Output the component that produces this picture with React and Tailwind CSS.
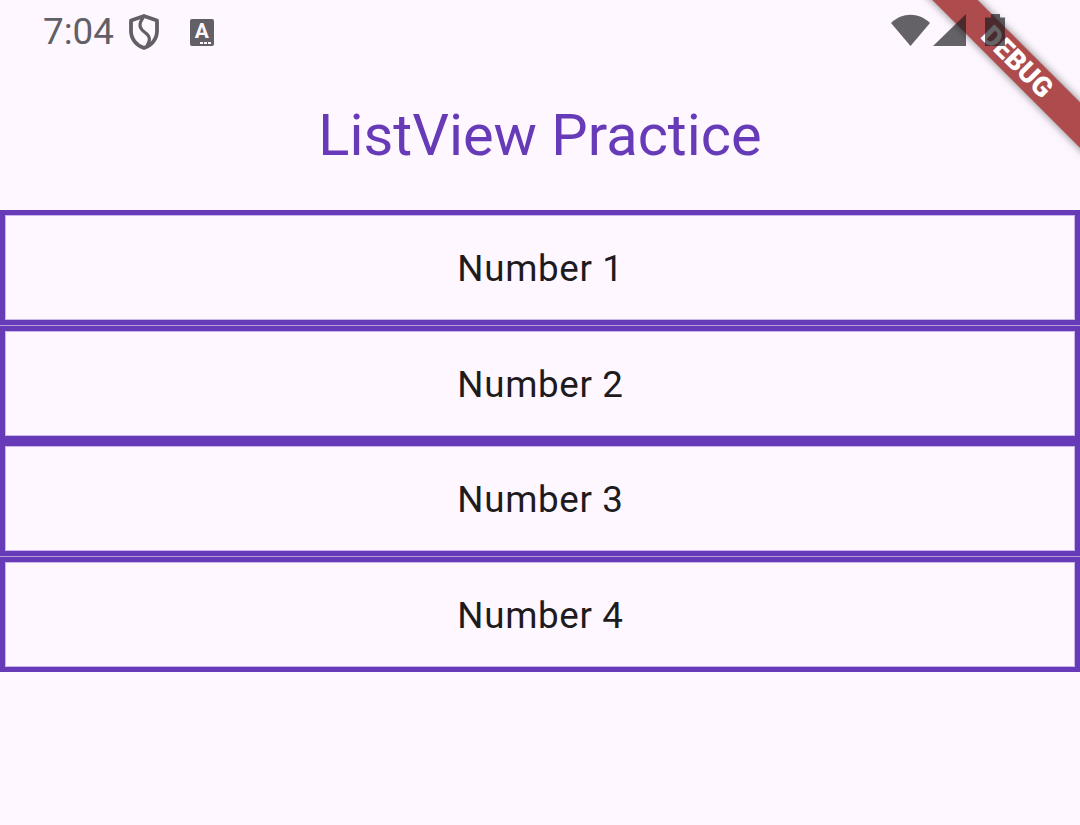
const font = { fontFamily: 'Roboto, sans-serif' };
const ink = 'rgba(28,27,31,0.68)';

function Shield() {
  return (
    <svg width="32" height="38" viewBox="0 0 32 38" className="ml-[13px] mt-[1px]">
      <path d="M16 3 L29 7.5 V18 C29 26 23.5 32.5 16 35 C8.500 32.5 3 26 3 18 V7.500 Z" fill="none" stroke="#625f66" strokeWidth="3.8" strokeLinejoin="round" />
      <path d="M15.500 4 C9.500 12 12 16 17 19.500 C22 23 23 27 19 33" fill="none" stroke="#625f66" strokeWidth="3.2" />
    </svg>
  );
}

function KeyboardBadge() {
  return (
    <div className="relative ml-[30px] mt-[1px] flex h-[27px] w-[24px] justify-center rounded-[2px] bg-[#625f66]">
      <span className="text-[21px] font-bold leading-[24px] text-[#fef7ff]">A</span>
      <div className="absolute bottom-[2px] right-[3px] flex gap-[1px]">
        <span className="h-[2px] w-[3px] bg-[#fef7ff]" />
        <span className="h-[2px] w-[3px] bg-[#fef7ff]" />
        <span className="h-[2px] w-[3px] bg-[#fef7ff]" />
      </div>
    </div>
  );
}

function StatusRight() {
  return (
    <svg width="115" height="36" viewBox="0 0 115 36">
      <path d="M0 10 C11 -1 28 -1 39 10 L19.500 33 Z" fill={ink} />
      <path d="M42 33 L75 1 V33 Z" fill={ink} />
      <path d="M100 1 H109 V4.500 H114 V33 H94 V4.500 H100 Z" fill={ink} />
    </svg>
  );
}

function Row({ label, className }) {
  return (
    <div className={`flex h-[115px] items-center justify-center border-[5px] border-[#673ab7] shadow-[inset_0_0_0_1px_#c9b6ea] ${className}`}>
      <span className="relative left-[0.5px] top-[2px] text-[36.75px] leading-none tracking-[0.656px] text-[#1d1b20]">{label}</span>
    </div>
  );
}

export default function App() {
  return (
    <div className="relative h-[825px] w-[1080px] overflow-hidden bg-[#fef7ff]" style={font}>
      <div className="relative z-10 flex h-[63px] items-center pl-[43px] pr-[74px]">
        <span className="relative top-[1px] text-[36.75px] leading-none text-[#625f66]">7:04</span>
        <div className="ml-[1px]"><Shield /></div>
        <KeyboardBadge />
        <div className="ml-auto mt-[-1px]"><StatusRight /></div>
      </div>
      <div className="flex h-[147px] items-center justify-center">
        <span className="relative top-[-1px] text-[57.75px] leading-none text-[#673ab7]">ListView Practice</span>
      </div>
      <div className="flex flex-col bg-[#b79de0]">
        <Row label="Number 1" className="bg-[#fef7ff]" />
        <Row label="Number 2" className="mt-px bg-[#fef7ff]" />
        <Row label="Number 3" className="bg-[#fef7ff]" />
        <Row label="Number 4" className="mt-px bg-[#fef7ff]" />
      </div>
      <div className="absolute left-[867px] top-[46px] flex h-[32px] w-[300px] rotate-45 items-center justify-center bg-[rgba(150,23,23,0.77)] shadow-[0_0_8px_rgba(0,0,0,0.5)]">
        <span className="text-[27.5px] font-black leading-none text-white">DEBUG</span>
      </div>
    </div>
  );
}
